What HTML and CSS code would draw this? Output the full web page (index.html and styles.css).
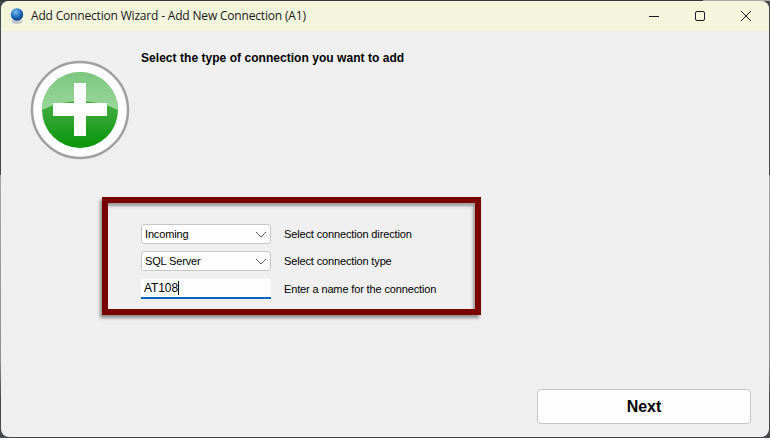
FILE: index.html
```html
<!DOCTYPE html>
<html lang="en">
<head>
<meta charset="utf-8">
<title>Add Connection Wizard</title>
<link rel="stylesheet" href="styles.css">
</head>
<body>
<div class="window">
  <header class="titlebar">
    <svg class="app-icon" width="16" height="18" viewBox="0 0 16 18">
      <defs>
        <radialGradient id="globe" cx="0.4" cy="0.3" r="0.8">
          <stop offset="0" stop-color="#7fc0f0"/>
          <stop offset="0.5" stop-color="#1f6fc0"/>
          <stop offset="1" stop-color="#0b2f6a"/>
        </radialGradient>
      </defs>
      <ellipse cx="8" cy="14.500" rx="5.500" ry="2.500" fill="#c4c8cc"/>
      <circle cx="8" cy="7.500" r="6.200" fill="url(#globe)"/>
    </svg>
    <span class="title">Add Connection Wizard - Add New Connection (A1)</span>
    <div class="controls">
      <svg class="ctl" width="46" height="30" viewBox="0 0 46 30"><path d="M18 15.500h10" stroke="#1a1a1a" fill="none"/></svg>
      <svg class="ctl" width="46" height="30" viewBox="0 0 46 30"><rect x="18.500" y="10.500" width="9" height="9" rx="1.500" stroke="#1a1a1a" fill="none"/></svg>
      <svg class="ctl" width="46" height="30" viewBox="0 0 46 30"><path d="M18 10l10 10M28 10l-10 10" stroke="#1a1a1a" fill="none"/></svg>
    </div>
  </header>
  <main class="content">
    <div class="intro">
      <svg class="plus" width="100" height="100" viewBox="0 0 100 100">
        <defs>
          <linearGradient id="top" x1="0" y1="0" x2="0" y2="1">
            <stop offset="0" stop-color="#7cc67f"/>
            <stop offset="1" stop-color="#9ad89c"/>
          </linearGradient>
          <linearGradient id="bottom" x1="0" y1="0" x2="0" y2="1">
            <stop offset="0" stop-color="#6cc06c"/>
            <stop offset="1" stop-color="#089408"/>
          </linearGradient>
        </defs>
        <circle cx="50" cy="50" r="48" fill="#fff" stroke="#a0a0a0" stroke-width="2.500"/>
        <circle cx="50" cy="50" r="38" fill="url(#bottom)"/>
        <path d="M12 50a38 38 0 0 1 76 0q-18-9-38-9t-38 9z" fill="url(#top)"/>
        <path d="M44 23h12v20h21v13h-21v20h-12v-20h-21v-13h21z" fill="#fff"/>
      </svg>
      <h1 class="heading">Select the type of connection you want to add</h1>
    </div>
    <section class="panel">
      <div class="row">
        <div class="select"><span>Incoming</span><svg width="12" height="7" viewBox="0 0 12 7"><path d="M1 1l5 5 5-5" stroke="#606060" fill="none"/></svg></div>
        <label class="hint">Select connection direction</label>
      </div>
      <div class="row">
        <div class="select"><span>SQL Server</span><svg width="12" height="7" viewBox="0 0 12 7"><path d="M1 1l5 5 5-5" stroke="#606060" fill="none"/></svg></div>
        <label class="hint">Select connection type</label>
      </div>
      <div class="row row-input">
        <div class="input"><span>AT108</span><i class="caret"></i></div>
        <label class="hint">Enter a name for the connection</label>
      </div>
    </section>
    <footer class="actions"><button class="next">Next</button></footer>
  </main>
</div>
</body>
</html>
```
FILE: styles.css
```css
html, body { margin: 0; padding: 0; height: 100%; overflow: hidden; }
body {
  background:
    linear-gradient(to right, #33363a 0, #33363a 703px, #a9a9a9 703px) top left / 100% 1px no-repeat,
    linear-gradient(to bottom, #45484c 0, #45484c 175px, #a6a6a6 175px, #8e8e8e 360px, #45484c 400px);
}
.window {
  width: 768px; height: 436px; margin-left: 1px; margin-top: 1px;
  display: flex; flex-direction: column;
  background: #efefef; border-radius: 8px; overflow: hidden;
  font-family: "Liberation Sans", Arial, sans-serif; color: #000;
}
.titlebar { height: 30px; flex: none; background: #f3f5dd; display: flex; align-items: center; padding-left: 8px; }
.app-icon { flex: none; }
.title { margin-left: 6px; margin-top: -2px; font: 12px "Open Sans", sans-serif; letter-spacing: -0.18px; color: #1a1a1a; }
.controls { margin-left: auto; display: flex; }
.ctl { display: block; }
.content { flex: 1; display: flex; flex-direction: column; }
.intro { display: flex; align-items: flex-start; padding: 20px 0 0 30px; height: 105px; }
.plus { flex: none; margin-top: 9px; margin-left: -1px; }
.heading { margin: 0 0 0 11px; font-size: 12px; font-weight: bold; line-height: 14px; letter-spacing: 0.04px; }
.panel {
  margin: 41px 0 0 101px; width: 334px; height: 85px;
  border: 6px solid #780000;
  box-shadow: -2px 3px 3px rgba(0,0,0,.4), inset -2px 3px 3px rgba(0,0,0,.35);
  display: flex; flex-direction: column; gap: 7px; padding: 21px 0 0 33px; box-sizing: content-box;
}
.row { display: flex; align-items: center; height: 20px; }
.row-input { margin-top: 1px; }
.select {
  width: 130px; height: 20px; box-sizing: border-box; background: #fdfdfd;
  border: 1px solid #c8c8c8; border-radius: 3px; display: flex; align-items: center;
  justify-content: space-between; padding: 0 3px; font-size: 11px; letter-spacing: -0.15px;
}
.input {
  width: 130px; height: 20px; box-sizing: border-box; background: #fdfdfd;
  border-bottom: 2px solid #0067c0; display: flex; align-items: center; padding-left: 3px; font-size: 12px; letter-spacing: -0.1px;
}
.caret { width: 1px; height: 14px; background: #000; }
.hint { margin-left: 13px; font-size: 11px; letter-spacing: -0.14px; }
.actions { margin-top: auto; display: flex; justify-content: flex-end; padding: 0 18px 13px 0; }
.next {
  width: 214px; height: 35px; background: #fdfdfd; border: 1px solid #c6c6c6; border-radius: 4px;
  font: bold 16px "Liberation Sans", Arial, sans-serif; color: #000;
}
```
